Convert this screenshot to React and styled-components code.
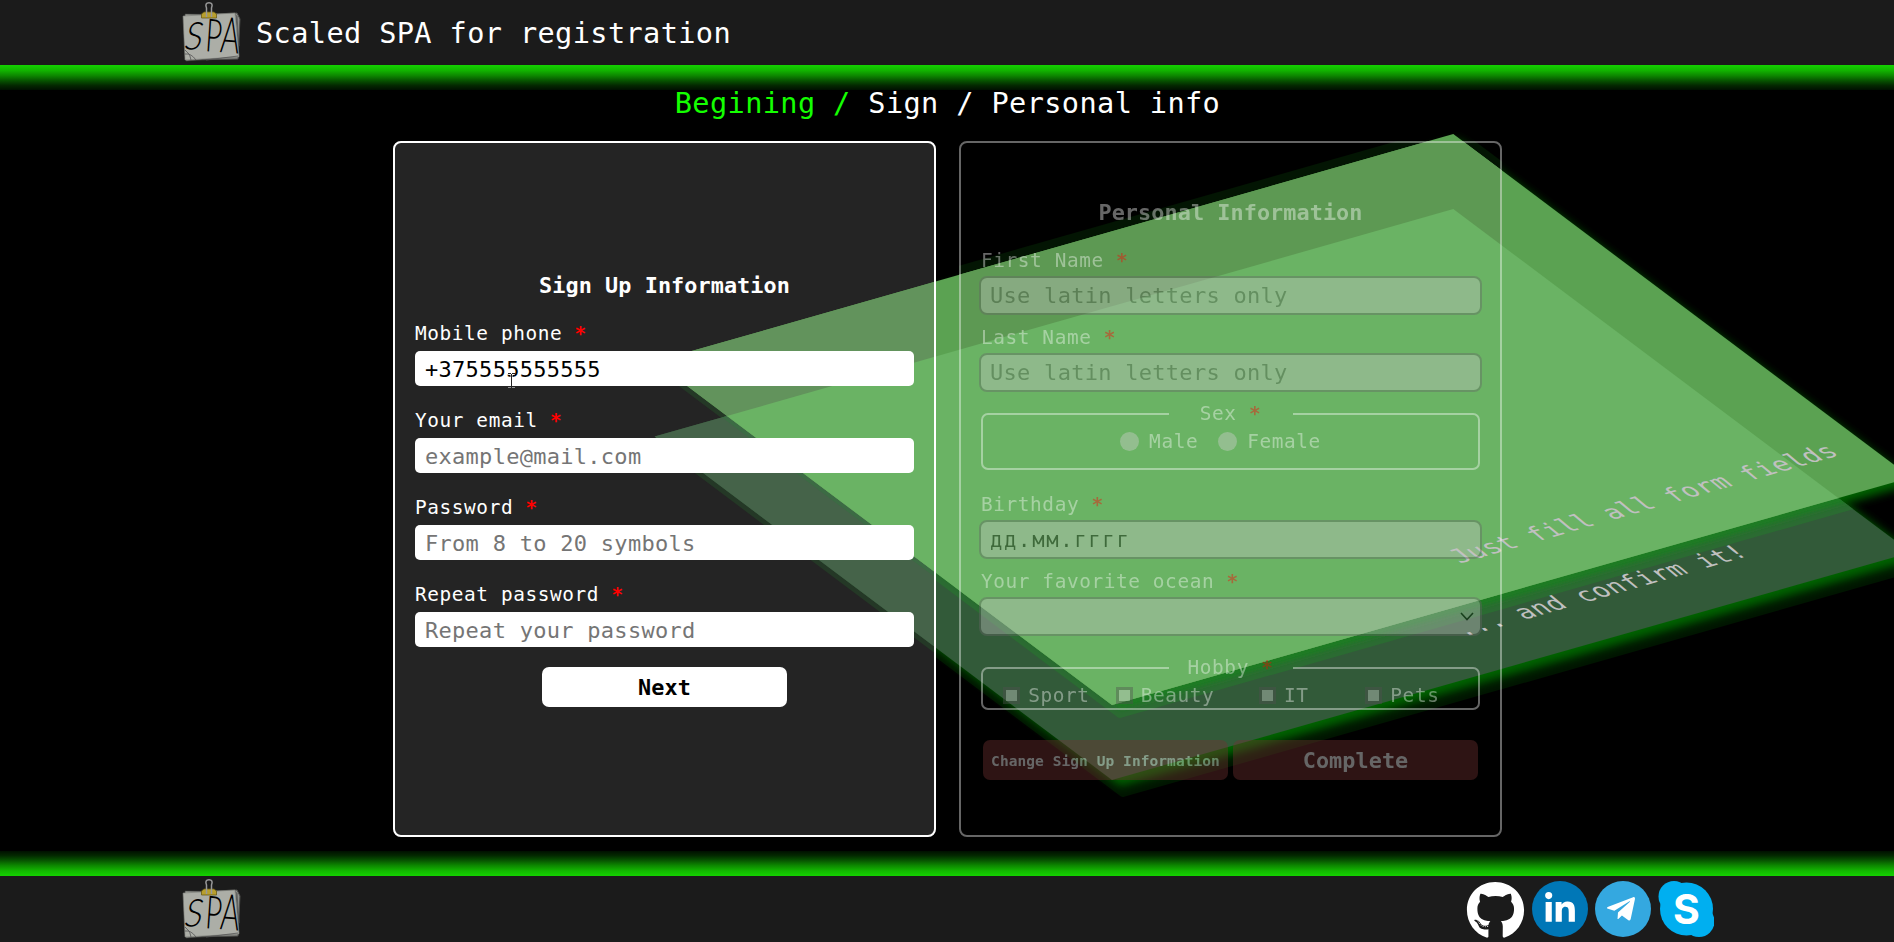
import React from "react";
import styled, { createGlobalStyle, css } from "styled-components";
import { FaGithub, FaLinkedinIn, FaTelegramPlane } from "react-icons/fa";

const mono = `"DejaVu Sans Mono", "Liberation Mono", monospace`;

const GlobalStyle = createGlobalStyle`
  * { box-sizing: border-box; }
  body { margin: 0; background: #000; color: #fff; font-family: ${mono}; overflow: hidden; }
  input, button, select { font-family: ${mono}; }
`;

const Page = styled.div`
  display: flex;
  flex-direction: column;
  width: 100%;
  height: 942px;
  overflow: hidden;
`;

const Bar = styled.header`
  display: flex;
  align-items: flex-start;
  flex: none;
  height: ${(p) => p.$height}px;
  padding: ${(p) => p.$height - 63}px 180px 0 182px;
  background: #1b1b1b;
`;

const Glow = styled.div`
  flex: none;
  height: 25px;
  background: linear-gradient(
    ${(p) => (p.$up ? "to top" : "to bottom")},
    #14d200 0%, #12b800 20%, #0d8800 42%, #065000 64%, #032800 82%, #001000 100%
  );
`;

const SiteTitle = styled.h1`
  margin: 10px 0 0 14px;
  font-size: 28.6px;
  line-height: 42px;
  font-weight: 400;
  letter-spacing: 0.38px;
`;

const Socials = styled.nav`
  display: flex;
  gap: 7px;
  margin: 2px 0 0 auto;
`;

const SocialLink = styled.a`
  display: grid;
  place-items: center;
  width: 56px;
  height: 56px;
  border-radius: 50%;
  color: #fff;
  background: ${(p) => p.$bg || "transparent"};
  svg { margin-left: ${(p) => p.$shift || 0}px; }
`;

const Main = styled.main`
  position: relative;
  flex: 1;
  min-height: 0;
`;

const Crumbs = styled.p`
  position: relative;
  z-index: 2;
  margin: 0;
  height: 51px;
  padding-left: 1px;
  line-height: 26px;
  text-align: center;
  font-size: 28.6px;
  letter-spacing: 0.38px;
`;

const CrumbDone = styled.span`
  color: #14ff00;
`;

const Cards = styled.div`
  display: flex;
  justify-content: center;
  gap: 23px;
  padding-left: 1px;
`;

const Card = styled.section`
  position: relative;
  width: 543px;
  height: 696px;
  &::before {
    content: "";
    position: absolute;
    inset: 0;
    border-radius: 8px;
    background: ${(p) => (p.$active ? "#242424" : "transparent")};
  }
`;

const CardBody = styled.form`
  position: relative;
  z-index: 2;
  height: 100%;
  padding: ${(p) => (p.$active ? 129 : 56)}px 20px 0;
  border: 2px solid #fff;
  border-radius: 8px;
  opacity: ${(p) => (p.$active ? 1 : 0.4)};
`;

const CardTitle = styled.h2`
  margin: 0 0 21px;
  font-size: 21.8px;
  line-height: 28px;
  letter-spacing: 0.08px;
  text-align: center;
`;

const labelText = css`
  font-size: 19.4px;
  line-height: 24px;
  letter-spacing: 0.6px;
`;

const Field = styled.div`
  position: relative;
  margin-bottom: ${(p) => (p.$last ? 20 : p.$muted ? 10.5 : 22)}px;
`;

const Label = styled.label`
  display: block;
  ${labelText}
  padding-top: 1px;
  margin-bottom: ${(p) => (p.$muted ? 3 : 5)}px;
`;

const Star = styled.span`
  color: #f00;
  font-weight: 700;
`;

const control = css`
  display: block;
  font-size: 22px;
  letter-spacing: 0.28px;
  outline: none;
  color: #000;
  ${(p) =>
    p.$muted
      ? css`
          width: 503px;
          height: 38.5px;
          margin: 0 -2px;
          padding: 0 9px;
          border: 2px solid #646464;
          border-radius: 8px;
          background: #c4c4c4;
        `
      : css`
          width: 499px;
          height: 35px;
          padding: 1px 10px 0;
          border: 0;
          border-radius: 5px;
          background: #fff;
        `}
`;

const Input = styled.input`
  ${control}
  &::placeholder {
    color: ${(p) => (p.$muted ? "#5c5c5c" : "#757575")};
    opacity: 1;
  }
`;

const DateInput = styled(Input)`
  font-size: 20.5px;
  letter-spacing: 1.7px;
  padding-top: 2px;
`;

const SelectBox = styled.div`
  ${control}
  display: flex;
  align-items: center;
  justify-content: flex-end;
  padding-right: 6px;
`;

const Pointer = styled.svg`
  position: absolute;
  left: 92px;
  bottom: -2px;
`;

const Group = styled.fieldset`
  height: ${(p) => p.$height}px;
  margin: ${(p) => p.$margin};
  padding: 0;
  border: 2px solid #fff;
  border-radius: 7px;
  min-width: 0;
`;

const Legend = styled.legend`
  width: 124px;
  margin: 0 auto;
  padding: 0;
  text-align: center;
  ${labelText}
`;

const Radios = styled.div`
  display: flex;
  justify-content: center;
  gap: 20px;
  height: 31px;
  padding-right: 20px;
`;

const Checks = styled.div`
  display: grid;
  grid-template-columns: repeat(4, 118.7px);
  justify-items: center;
  height: 31px;
  padding-left: 4px;
`;

const Choice = styled.label`
  display: flex;
  align-items: center;
  gap: ${(p) => p.$gap}px;
  ${labelText}
`;

const RadioDot = styled.span`
  width: 19px;
  height: 19px;
  border-radius: 50%;
  background: #d0d0d0;
`;

const CheckMark = styled.span`
  width: 17px;
  height: 17px;
  border: 3px solid #505050;
  background: #d0d0d0;
`;

const Button = styled.button`
  display: block;
  width: 245px;
  height: 40px;
  padding: ${(p) => (p.$small ? 1 : 0)}px 0 0;
  border: 0;
  border-radius: 7px;
  font-weight: 700;
  font-size: ${(p) => (p.$small ? 14.5 : 21.8)}px;
  letter-spacing: 0.07px;
  white-space: nowrap;
  color: ${(p) => (p.$muted ? "#fff" : "#000")};
  background: ${(p) => (p.$muted ? "#733232" : "#fff")};
`;

const Actions = styled.div`
  display: flex;
  justify-content: center;
  gap: 5px;
`;

const Backdrop = styled.svg`
  position: absolute;
  z-index: 1;
  left: 0;
  top: 0;
  pointer-events: none;
`;

const LogoArt = styled.svg`
  overflow: visible;
`;

const Logo = () => (
  <LogoArt width="60" height="60" viewBox="0 0 60 60">
    <path d="M6 13 L55 11 L58 17 L56 57 L9 58 Z" fill="#8f918c" stroke="#4c4d4a" strokeWidth="1" />
    <path d="M3 12 L54 13 L57 54 L4 59 Z" fill="#a9aba4" stroke="#3a3b39" strokeWidth=".7" />
    <path d="M1 14 L53 11 L57 55 L3 58 Z" fill="#acaea7" stroke="#777974" strokeWidth=".6" />
    <path d="M55 14 L57 44 M3 48 Q9 52 9 58 M3 52 Q9 51 14 58 M24 58 L56 54" fill="none" stroke="#555" strokeWidth=".8" />
    <path d="M19.500 12 L22 10 H32 L34.500 12 V16 H19.500 Z" fill="#b89f2c" stroke="#6b5c17" strokeWidth=".8" />
    <path d="M24.500 15 V6 Q22.500 .8 27 .8 Q31.500 .8 29.500 6 V15" fill="none" stroke="#999" strokeWidth="1.500" />
    <g fontFamily="Lato, sans-serif" fontWeight="300" fill="#000">
      <text transform="translate(1 48) rotate(-3) skewX(-14) scale(.88 1)" fontSize="38">S</text>
      <text transform="translate(22.500 49) rotate(6) skewX(2) scale(.62 1)" fontSize="46">P</text>
      <text transform="translate(37.500 50) rotate(5) scale(.58 1)" fontSize="50">A</text>
    </g>
  </LogoArt>
);

const SkypeMark = () => (
  <svg width="56" height="56" viewBox="0 0 56 56">
    <g fill="#00aff0">
      <circle cx="28.500" cy="28" r="26.500" />
      <circle cx="16" cy="15.500" r="15.500" />
      <circle cx="41" cy="40.500" r="15.500" />
    </g>
    <text x="28.500" y="42.500" textAnchor="middle" fontFamily="Inter, sans-serif" fontWeight="700" fontSize="41" fill="#fff">S</text>
  </svg>
);

const UPPER = "1453.300,134 1910.700,477.400 1112,705 654.600,361.600";
const LOWER = "1453.300,209 1910.700,552.400 1112,780 654.600,436.600";

const LayeredPanels = () => (
  <Backdrop width="1894" height="761" viewBox="0 90 1894 761">
    <defs>
      <filter id="soft" x="-10%" y="-10%" width="120%" height="120%">
        <feGaussianBlur stdDeviation="5" />
      </filter>
      <filter id="tight" x="-10%" y="-10%" width="120%" height="120%">
        <feGaussianBlur stdDeviation="2.500" />
      </filter>
      <clipPath id="upper"><polygon points={UPPER} /></clipPath>
      <clipPath id="lower"><polygon points={LOWER} /></clipPath>
      <clipPath id="left"><rect x="393" y="141" width="543" height="696" /></clipPath>
      <clipPath id="right"><rect x="959" y="141" width="543" height="696" /></clipPath>
      <clipPath id="outside"><rect x="936" y="90" width="958" height="761" /></clipPath>
    </defs>
    <g clipPath="url(#left)" fill="#243826">
      <polygon points={LOWER} transform="translate(1 7)" />
      <polygon points={UPPER} transform="translate(1 7)" />
    </g>
    <g clipPath="url(#outside)">
      <polygon points={LOWER} fill="#001500" stroke="#001500" strokeWidth="8" strokeLinejoin="round" transform="translate(11 13)" />
      <polygon points={LOWER} fill="#006400" filter="url(#soft)" transform="translate(8 6)" />
      <polygon points={UPPER} fill="#006400" filter="url(#soft)" transform="translate(5 6)" />
    </g>
    <g clipPath="url(#right)">
      <polygon points={UPPER} fill="#031503" transform="translate(0 -9)" />
    </g>
    <polygon points={LOWER} fill="#325a39" />
    <g clipPath="url(#left)"><polygon points={LOWER} fill="#456349" /></g>
    <g clipPath="url(#lower)">
      <g clipPath="url(#left)">
        <polygon points={UPPER} fill="#3c6b44" transform="translate(1 6)" />
      </g>
      <g clipPath="url(#outside)">
        <polygon points={UPPER} fill="#2b6b32" stroke="#2b6b32" strokeWidth="8" strokeLinejoin="round" transform="translate(8 9)" />
        <polygon points={UPPER} fill="#1c7c23" filter="url(#tight)" transform="translate(9 4)" />
      </g>
    </g>
    <polygon points={UPPER} fill="#5ba252" />
    <g clipPath="url(#left)"><polygon points={UPPER} fill="#62935c" /></g>
    <g clipPath="url(#right)"><polygon points={UPPER} fill="#5d9953" /></g>
    <g clipPath="url(#upper)"><polygon points={LOWER} fill="#6ab364" /></g>
    <g fontFamily="DejaVu Sans Mono, monospace" fontSize="28.6" letterSpacing=".38" fill="#c0c0c0">
      <text transform="matrix(.866 -.247 .7 .58 1460 563.500)">Just fill all form fields</text>
      <text transform="matrix(.856 -.244 .7 .58 1464 637)">... and confirm it!</text>
    </g>
  </Backdrop>
);

const Caption = ({ children, muted }) => (
  <Label $muted={muted}>
    {children} <Star>*</Star>
  </Label>
);

const signFields = [
  { label: "Mobile phone", value: "+375555555555", pointer: true },
  { label: "Your email", hint: "example@mail.com" },
  { label: "Password", hint: "From 8 to 20 symbols" },
  { label: "Repeat password", hint: "Repeat your password" },
];

export default function App() {
  return (
    <Page>
      <GlobalStyle />
      <Bar $height={65}>
        <Logo />
        <SiteTitle>Scaled SPA for registration</SiteTitle>
      </Bar>
      <Glow />
      <Main>
        <Crumbs>
          <CrumbDone>Begining /</CrumbDone> Sign / Personal info
        </Crumbs>
        <LayeredPanels />
        <Cards>
          <Card $active>
            <CardBody $active>
              <CardTitle>Sign Up Information</CardTitle>
              {signFields.map((f, i) => (
                <Field key={f.label} $last={i === signFields.length - 1}>
                  <Caption>{f.label}</Caption>
                  <Input defaultValue={f.value} placeholder={f.hint} />
                  {f.pointer && (
                    <Pointer width="9" height="16" viewBox="0 0 9 16" fill="none">
                      <path d="M1 1.500H4M5 1.500H8M4.500 2V14M1 14.500H4M5 14.500H8" stroke="#fff" strokeWidth="2" />
                      <path d="M1 1.500H4M5 1.500H8M4.500 2V14M1 14.500H4M5 14.500H8" stroke="#222" />
                    </Pointer>
                  )}
                </Field>
              ))}
              <Actions>
                <Button type="button">Next</Button>
              </Actions>
            </CardBody>
          </Card>
          <Card>
            <CardBody>
              <CardTitle>Personal Information</CardTitle>
              <Field $muted>
                <Caption muted>First Name</Caption>
                <Input $muted placeholder="Use latin letters only" />
              </Field>
              <Field $muted>
                <Caption muted>Last Name</Caption>
                <Input $muted placeholder="Use latin letters only" />
              </Field>
              <Group $height={68} $margin="0 0 22px">
                <Legend>
                  Sex <Star>*</Star>
                </Legend>
                <Radios>
                  <Choice $gap={10}><RadioDot />Male</Choice>
                  <Choice $gap={10}><RadioDot />Female</Choice>
                </Radios>
              </Group>
              <Field $muted>
                <Caption muted>Birthday</Caption>
                <DateInput $muted defaultValue="дд.мм.гггг" />
              </Field>
              <Field $muted>
                <Caption muted>Your favorite ocean</Caption>
                <SelectBox $muted>
                  <svg width="14" height="9" viewBox="0 0 14 9">
                    <path d="M1 1l6 6.500L13 1" fill="none" stroke="#000" strokeWidth="1.600" />
                  </svg>
                </SelectBox>
              </Field>
              <Group $height={54} $margin="20.5px 0 30px">
                <Legend>
                  Hobby <Star>*</Star>
                </Legend>
                <Checks>
                  {["Sport", "Beauty", "IT", "Pets"].map((name) => (
                    <Choice key={name} $gap={8}><CheckMark />{name}</Choice>
                  ))}
                </Checks>
              </Group>
              <Actions>
                <Button type="button" $muted $small>Change Sign Up Information</Button>
                <Button type="button" $muted>Complete</Button>
              </Actions>
            </CardBody>
          </Card>
        </Cards>
      </Main>
      <Glow $up />
      <Bar as="footer" $height={66}>
        <Logo />
        <Socials>
          <SocialLink $shift={-4}><FaGithub size={59} /></SocialLink>
          <SocialLink $bg="#0077b7"><FaLinkedinIn size={34} /></SocialLink>
          <SocialLink $bg="#34a8e0" $shift={-4}><FaTelegramPlane size={32} /></SocialLink>
          <SocialLink><SkypeMark /></SocialLink>
        </Socials>
      </Bar>
    </Page>
  );
}
